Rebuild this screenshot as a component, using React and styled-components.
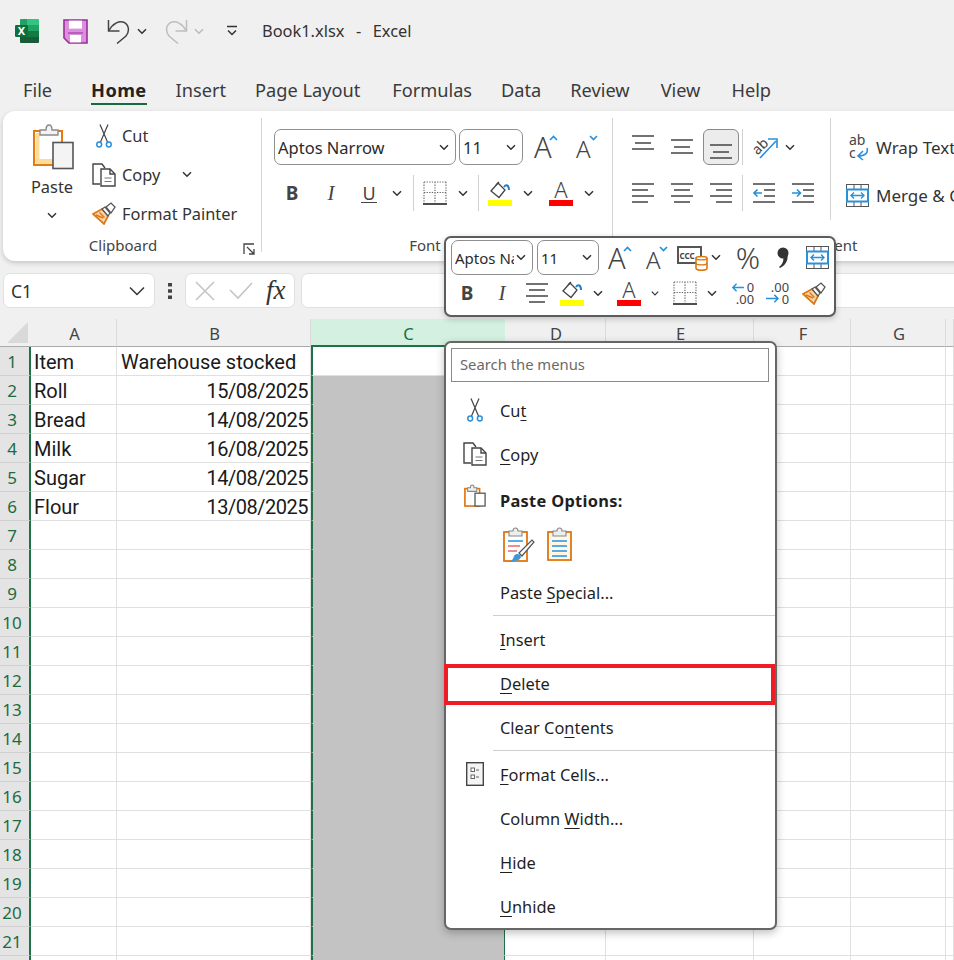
import React from "react";
import styled, { createGlobalStyle } from "styled-components";

const GlobalStyle = createGlobalStyle`
  html, body {
    margin: 0;
    padding: 0;
    width: 954px;
    height: 960px;
    overflow: hidden;
    background: #f0f0f0;
    font-family: "Noto Sans", "Open Sans", sans-serif;
    color: #2b2b2b;
  }
`;

const Page = styled.div`
  position: relative;
  width: 954px;
  height: 960px;
  overflow: hidden;
  display: flex;
  flex-direction: column;
`;

const TitleBar = styled.div`
  height: 62px;
  display: flex;
  align-items: center;
  flex: none;
`;

const Slot = styled.div`
  width: ${p => p.$w}px;
  margin-left: ${p => p.$ml || 0}px;
  flex: none;
  display: flex;
  align-items: center;
  justify-content: center;
`;

const TitleText = styled.div`
  margin-left: 24px;
  padding-bottom: 2px;
  font-size: 16.4px;
  word-spacing: 1.5px;
  white-space: pre;
  color: #333;
`;

const Tabs = styled.div`
  height: 49px;
  flex: none;
  display: flex;
  padding-left: 23px;
`;

const Tab = styled.div`
  margin-left: ${p => p.$ml}px;
  padding-top: 15px;
  height: 26px;
  font-size: 18.2px;
  line-height: 26px;
  font-weight: ${p => (p.$active ? 700 : 400)};
  letter-spacing: ${p => (p.$active ? "0.4px" : "0")};
  color: ${p => (p.$active ? "#222" : "#3a3a3a")};
  border-bottom: 2px solid ${p => (p.$active ? "#146c3e" : "transparent")};
`;

const Ribbon = styled.div`
  flex: none;
  width: 1100px;
  height: 150px;
  margin-left: 3px;
  background: #fff;
  border-radius: 12px;
  box-shadow: 0 2px 5px rgba(0, 0, 0, 0.18);
  display: flex;
`;

const Group = styled.div`
  width: ${p => p.$w}px;
  flex: none;
  display: flex;
  flex-direction: column;
  position: relative;
`;

const GroupBody = styled.div`
  flex: 1;
  padding: ${p => p.$pad || "18px 0 0 12px"};
  display: flex;
  min-height: 0;
`;

const GroupFooter = styled.div`
  height: 32px;
  display: flex;
  align-items: flex-start;
`;

const GroupLabel = styled.div`
  flex: 1;
  padding-top: 4px;
  padding-right: ${p => p.$pr || 0}px;
  text-align: center;
  font-size: 15px;
  line-height: 24px;
  color: #444;
`;

const Launcher = styled.div`
  width: 14px;
  margin-right: 4px;
  padding-top: 9px;
`;

const GroupSep = styled.div`
  width: 1px;
  flex: none;
  margin: ${p => p.$m || "7px 0 9px"};
  background: #d4d4d4;
`;

const PasteButton = styled.div`
  width: 44px;
  margin-left: 27px;
  padding-top: 13px;
  display: flex;
  flex-direction: column;
  align-items: center;
  font-size: 16.4px;
  line-height: 22px;
  color: #333;
`;

const PasteIconBox = styled.div`
  height: 52px;
  margin-left: 4px;
`;

const PasteChevron = styled.div`
  margin-top: 4px;
`;

const Commands = styled.div`
  margin-left: 18px;
  padding-top: 5px;
  display: flex;
  flex-direction: column;
`;

const Command = styled.div`
  height: 39px;
  flex: none;
  display: flex;
  align-items: center;
  font-size: 16.4px;
  color: #333;
`;

const CommandIcon = styled.div`
  width: 30px;
  flex: none;
  display: flex;
  justify-content: ${p => (p.$center ? "center" : "flex-start")};
  padding-right: ${p => (p.$center ? 6 : 0)}px;
  box-sizing: border-box;
`;

const Stack = styled.div`
  width: ${p => p.$w || "auto"};
  flex: none;
  display: flex;
  flex-direction: column;
`;

const Strip = styled.div`
  display: flex;
  align-items: center;
  height: ${p => p.$h || 36}px;
  margin-top: ${p => p.$mt || 0}px;
  flex: none;
`;

const SelectBox = styled.div`
  width: ${p => p.$w}px;
  height: ${p => p.$h || 36}px;
  margin-right: ${p => p.$mr ?? 3}px;
  flex: none;
  box-sizing: border-box;
  border: 1px solid #8f8f8f;
  border-radius: 7px;
  background: #fff;
  display: flex;
  align-items: center;
  padding: 0 6px 0 3px;
  font-size: ${p => p.$fs || 16.5}px;
  color: #2b2b2b;
  overflow: hidden;
`;

const SelectText = styled.span`
  flex: 1;
  margin-right: 2px;
  overflow: hidden;
  white-space: nowrap;
`;

const Glyph = styled.span`
  font-family: ${p => (p.$serif ? '"Liberation Serif", serif' : '"Noto Sans", sans-serif')};
  font-size: ${p => p.$fs || 19}px;
  font-weight: ${p => p.$weight || 400};
  font-style: ${p => (p.$italic ? "italic" : "normal")};
  line-height: 1;
  color: #444;
  ${p => p.$underline && "border-bottom: 1.5px solid #444; padding: 0 1px;"}
`;

const VSep = styled.div`
  width: 1px;
  height: 36px;
  flex: none;
  background: #d0d0d0;
  margin-left: ${p => p.$ml || 0}px;
`;

const AlignButton = styled.div`
  width: 36px;
  height: 36px;
  flex: none;
  margin-left: ${p => p.$ml || 0}px;
  box-sizing: border-box;
  display: flex;
  justify-content: center;
  border: 1px solid ${p => (p.$active ? "#8a8a8a" : "transparent")};
  border-radius: 6px;
  background: ${p => (p.$active ? "#ececec" : "transparent")};
`;

const WrapColumn = styled.div`
  margin-left: 15px;
  display: flex;
  flex-direction: column;
  gap: 12px;
`;

const WrapRow = styled.div`
  height: 36px;
  display: flex;
  align-items: center;
  gap: 7px;
  font-size: 17px;
  color: #333;
  white-space: nowrap;
`;

const FormulaBar = styled.div`
  flex: none;
  margin-top: 12px;
  height: 35px;
  padding-left: 3px;
  display: flex;
  align-items: stretch;
`;

const NameBox = styled.div`
  width: 152px;
  flex: none;
  box-sizing: border-box;
  background: #fff;
  border: 1px solid #e0e0e0;
  border-radius: 7px;
  padding: 0 9px 0 7px;
  display: flex;
  align-items: center;
  justify-content: space-between;
  font-size: 17.5px;
  color: #333;
`;

const Dots = styled.div`
  width: 30px;
  flex: none;
  display: flex;
  align-items: center;
  justify-content: center;
`;

const FxBox = styled.div`
  width: 110px;
  flex: none;
  box-sizing: border-box;
  background: #fff;
  border: 1px solid #e0e0e0;
  border-radius: 7px;
  display: flex;
  align-items: center;
  padding-left: 9px;
`;

const FxGlyph = styled.span`
  margin-left: 13px;
  font-family: "Liberation Serif", serif;
  font-style: italic;
  font-size: 27px;
  font-weight: 400;
  color: #333;
  line-height: 1;
`;

const FormulaInput = styled.div`
  flex: none;
  width: 700px;
  margin-left: 6px;
  box-sizing: border-box;
  background: #fff;
  border: 1px solid #e0e0e0;
  border-radius: 7px;
`;

const Sheet = styled.div`
  flex: none;
  margin-top: 11px;
  display: grid;
  grid-template-columns: 31px 86px 194px 194px 101px 148px 97px 95px 8px;
  grid-template-rows: 28px repeat(22, 29px);
`;

const Corner = styled.div`
  background: #f0f0f0;
  border-bottom: 1px solid #aaa;
  box-sizing: border-box;
  display: flex;
  align-items: flex-end;
  justify-content: flex-end;
  padding: 0 3px 3px 0;
`;

const ColHead = styled.div`
  box-sizing: border-box;
  background: ${p => (p.$selected ? "#d3f0e0" : "#f0f0f0")};
  color: ${p => (p.$selected ? "#1c6b41" : "#444")};
  border-right: 1px solid ${p => (p.$selected ? "#d3f0e0" : "#dadada")};
  border-bottom: ${p => (p.$selected ? "2px solid #1f7246" : "1px solid #aaa")};
  font-size: 16.5px;
  display: flex;
  align-items: center;
  justify-content: center;
  padding: 2px 0 0 2px;
`;

const RowHead = styled.div`
  box-sizing: border-box;
  background: #e4e4e4;
  color: #1c6b41;
  border-bottom: 1px solid #cfcfcf;
  border-right: 2px solid #1f7246;
  font-size: 17px;
  display: flex;
  align-items: center;
  justify-content: center;
  padding-right: 5px;
`;

const Cell = styled.div`
  box-sizing: border-box;
  background: ${p => (p.$shade ? "#c3c3c3" : "#fff")};
  border-bottom: 1px solid ${p => (p.$shade ? "#c3c3c3" : "#e0e0e0")};
  border-right: 1px solid #e0e0e0;
  font-family: "Roboto", sans-serif;
  font-size: 20px;
  color: #1a1a1a;
  line-height: 30px;
  padding: 0 2px 0 ${p => p.$pl || 3}px;
  letter-spacing: ${p => (p.$right ? "-0.5px" : "0")};
  text-align: ${p => (p.$right ? "right" : "left")};
  white-space: nowrap;
  ${p => p.$selected && "border-left: 2px solid #1f7246; border-right: 2px solid #1f7246; margin-right: -1px;"}
`;

const MiniBar = styled.div`
  position: absolute;
  left: 444px;
  top: 236px;
  width: 392px;
  height: 81px;
  box-sizing: border-box;
  padding: 2px 5px;
  background: #fff;
  border: 2px solid #5c5c5c;
  border-radius: 7px;
  box-shadow: 0 2px 6px rgba(0, 0, 0, 0.2);
  overflow: hidden;
`;

const Menu = styled.div`
  position: absolute;
  left: 444px;
  top: 341px;
  width: 333px;
  height: 589px;
  box-sizing: border-box;
  padding: 5px 0 0;
  background: #fff;
  border: 2px solid #666;
  border-radius: 7px;
  box-shadow: 0 3px 8px rgba(0, 0, 0, 0.25);
`;

const SearchBox = styled.div`
  height: 34px;
  margin: 0 6px 7px 5px;
  box-sizing: border-box;
  border: 1px solid #8a8a8a;
  display: flex;
  align-items: center;
  padding: 0 0 3px 8px;
  font-size: 14.8px;
  color: #6a6a6a;
`;

const MenuItem = styled.div`
  position: relative;
  height: ${p => p.$h || 44}px;
  box-sizing: border-box;
  padding-bottom: ${p => (p.$bold ? 0 : 2)}px;
  display: flex;
  align-items: center;
  font-size: 16.4px;
  font-weight: ${p => (p.$bold ? 700 : 400)};
  letter-spacing: ${p => (p.$bold ? "0.3px" : "0")};
  color: #1f1f1f;
  ${p => p.$highlight && `
    &::after {
      content: "";
      position: absolute;
      left: -2px;
      right: 0;
      top: 2px;
      bottom: 1px;
      border: 4.5px solid #ee1c25;
    }
  `}
  u {
    text-underline-offset: 3px;
    text-decoration-thickness: 1px;
  }
`;

const MenuIcon = styled.div`
  width: 54px;
  flex: none;
  box-sizing: border-box;
  padding-left: 4px;
  display: flex;
  justify-content: center;
  ${p => p.$top && "align-self: flex-start; margin-top: 6px;"}
`;

const MenuSep = styled.div`
  height: 1px;
  margin: 0 0 2px 47px;
  background: #cfcfcf;
`;

const PasteChoices = styled.div`
  height: 48px;
  box-sizing: border-box;
  padding: 4px 0 0 57px;
  display: flex;
  align-items: flex-start;
  gap: 12px;
`;

const line = { stroke: "#444", strokeWidth: 1.4, fill: "none" };
const blue = { stroke: "#2a90d9", strokeWidth: 1.6, fill: "none" };

const Chev = ({ light, wide }) => (
  <svg width={wide ? 16 : 10} height={wide ? 10 : 7} viewBox={wide ? "0 0 16 10" : "0 0 10 7"}>
    <path
      d={wide ? "M1 1.5l7 7 7-7" : "M1 1.2l4 4 4-4"}
      fill="none"
      stroke={light ? "#bbb" : "#333"}
      strokeWidth={1.5}
    />
  </svg>
);

const ExcelLogo = () => (
  <svg width="24" height="24" viewBox="0 0 24 24">
    <path d="M6 0h6v6H5V1a1 1 0 0 1 1-1z" fill="#21a366" />
    <path d="M12 0h11a1 1 0 0 1 1 1v5H12z" fill="#33c481" />
    <rect x="5" y="6" width="7" height="6" fill="#107c41" />
    <rect x="12" y="6" width="12" height="6" fill="#21a366" />
    <rect x="5" y="12" width="7" height="6" fill="#185c37" />
    <rect x="12" y="12" width="12" height="6" fill="#107c41" />
    <path d="M5 18h19v5a1 1 0 0 1-1 1H6a1 1 0 0 1-1-1z" fill="#185c37" />
    <rect x="0" y="6" width="13" height="12" rx="1.2" fill="#0f6f3c" />
    <text x="6.5" y="15.6" textAnchor="middle" fontSize="11" fontWeight="700" fontFamily="Noto Sans" fill="#fff">X</text>
  </svg>
);

const SaveIcon = () => (
  <svg width="25" height="25" viewBox="0 0 25 25">
    <path d="M1 1h23v23H6l-5-5z" fill="#dc8fdc" stroke="#9b2d9b" strokeWidth="1.6" />
    <rect x="6" y="1.6" width="13" height="8" fill="#fff" />
    <rect x="7" y="16" width="11" height="7.4" fill="#fff" />
    <path d="M5 14h15" stroke="#9b2d9b" strokeWidth="1" />
  </svg>
);

const UndoIcon = ({ color, flip }) => (
  <svg width="24" height="25" viewBox="0 0 24 25" style={flip ? { transform: "scaleX(-1)" } : undefined}>
    <path d="M1.5 1v11h11" fill="none" stroke={color} strokeWidth="1.5" />
    <path d="M2 11.5C6 4 12 2 16 3c6 2 7 9 3 14L10 24.5" fill="none" stroke={color} strokeWidth="1.5" />
  </svg>
);

const CustomizeIcon = () => (
  <svg width="12" height="12" viewBox="0 0 12 12">
    <path d="M1 1.5h10" stroke="#333" strokeWidth="1.5" />
    <path d="M2 5.5l4 4 4-4" fill="none" stroke="#333" strokeWidth="1.5" />
  </svg>
);

const PasteBig = () => (
  <svg width="42" height="46" viewBox="0 0 42 46">
    <rect x="1" y="7" width="28" height="34" fill="#fff" stroke="#e8790f" strokeWidth="2" />
    <rect x="2.5" y="35" width="25" height="5" fill="#fbdc9c" />
    <rect x="2.5" y="9" width="4" height="30" fill="#fbdc9c" />
    <path d="M7 11V6h6c0-3 1-5 3-5s3 2 3 5h6v5z" fill="#f3f3f3" stroke="#8a8a8a" strokeWidth="1.4" />
    <rect x="20" y="18.5" width="20" height="26" fill="#f4f4f4" stroke="#555" strokeWidth="1.6" />
  </svg>
);

const Scissors = () => (
  <svg width="16" height="24" viewBox="0 0 16 24">
    <path d="M4 0.5l7.5 17.5M12 0.5L4.5 18" fill="none" stroke="#444" strokeWidth="1.2" />
    <circle cx="3.2" cy="20.5" r="2.4" fill="none" stroke="#2a90d9" strokeWidth="1.5" />
    <circle cx="12.8" cy="20.5" r="2.4" fill="none" stroke="#2a90d9" strokeWidth="1.5" />
  </svg>
);

const CopyIcon = () => (
  <svg width="24" height="24" viewBox="0 0 24 24">
    <path d="M8 21H1V1h9l3 4" {...line} />
    <path d="M9 6h9l5 5v12H9z" fill="#fff" stroke="#444" strokeWidth="1.4" />
    <path d="M18 6v5h5" {...line} />
    <path d="M12.5 15h7M12.5 18.5h7" stroke="#777" strokeWidth="1.1" />
  </svg>
);

const PainterIcon = () => (
  <svg width="24" height="23" viewBox="0 0 24 23">
    <path d="M1 12l9-5 6 7-4 8z" fill="#f7d6ae" stroke="#e0760f" strokeWidth="1.7" />
    <path d="M4 13l7 3M7.5 10.5l5 5" stroke="#e0760f" strokeWidth="1.4" />
    <path d="M10 7l3-2 5 6-2 3z" fill="#fff" stroke="#555" strokeWidth="1.3" />
    <path d="M14 5l5-4 4 4-4 6z" fill="#fff" stroke="#555" strokeWidth="1.3" />
  </svg>
);

const LauncherIcon = () => (
  <svg width="12" height="12" viewBox="0 0 12 12">
    <path d="M11 1H1v10" fill="none" stroke="#444" strokeWidth="1.3" />
    <path d="M4 4l7 7M11 6v5H6" fill="none" stroke="#444" strokeWidth="1.3" />
  </svg>
);

const SizeA = ({ up, big }) => (
  <svg width="24" height="26" viewBox="0 0 24 26">
    <text x={big ? 0 : 2} y="24" fontFamily="Noto Sans" fontWeight="300" fontSize={big ? 29 : 24} fill="#444">A</text>
    <path d={up ? "M16 6l3.5-3.5L23 6" : "M16 2l3.5 3.5L23 2"} fill="none" stroke="#2a90d9" strokeWidth="1.7" />
  </svg>
);

const BorderIcon = () => (
  <svg width="24" height="24" viewBox="0 0 24 24">
    <path d="M1 1h22M1 1v21M23 1v21M12 1v21M1 11.5h22" fill="none" stroke="#666" strokeWidth="1.1" strokeDasharray="1.3 1.3" />
    <path d="M0 23h24" stroke="#222" strokeWidth="1.6" />
  </svg>
);

const FillIcon = () => (
  <svg width="24" height="26" viewBox="0 0 24 26">
    <path d="M3 11l7-8 7 7-6 7.5z" fill="#fff" stroke="#444" strokeWidth="1.3" />
    <path d="M8 5l3-3" stroke="#444" strokeWidth="1.3" />
    <path d="M16 7c2-3 5-2 5 3" fill="none" stroke="#1f7fc9" strokeWidth="2" />
    <rect x="0" y="20" width="24" height="6" fill="#ffff00" />
  </svg>
);

const FontColorIcon = () => (
  <svg width="24" height="26" viewBox="0 0 24 26">
    <text x="12" y="18" textAnchor="middle" fontFamily="Noto Sans" fontWeight="300" fontSize="22" fill="#444">A</text>
    <rect x="0" y="20" width="24" height="6" fill="#ff0000" />
  </svg>
);

const VAlignIcon = ({ ys }) => (
  <svg width="22" height="34" viewBox="0 0 22 34">
    <path d={`M0 ${ys[0]}h22M3 ${ys[1]}h16M0 ${ys[2]}h22`} stroke="#444" strokeWidth="1.4" />
  </svg>
);

const HAlignIcon = ({ kind }) => {
  const x = kind === "left" ? 0 : kind === "center" ? 3 : 6;
  return (
    <svg width="22" height="20" viewBox="0 0 22 20">
      <path d={`M0 1h22M${x} 7h16M0 13h22M${x} 19h16`} stroke="#444" strokeWidth="1.4" />
    </svg>
  );
};

const IndentIcon = ({ more }) => (
  <svg width="22" height="20" viewBox="0 0 22 20">
    <path d="M0 1h22M11 7h11M11 13h11M0 19h22" stroke="#444" strokeWidth="1.4" />
    <path d={more ? "M0 10h8M5 6.5L8.5 10 5 13.5" : "M9 10H1M4.5 6.5L1 10l3.5 3.5"} {...blue} />
  </svg>
);

const OrientIcon = () => (
  <svg width="26" height="24" viewBox="0 0 26 24">
    <text x="0" y="17" transform="rotate(-45 7 12)" fontFamily="Noto Sans" fontSize="14" fill="#444">ab</text>
    <path d="M8 23L24 6M16 4h9v9" {...blue} />
  </svg>
);

const WrapIcon = () => (
  <svg width="23" height="27" viewBox="-3 0 23 27">
    <text x="0" y="11" fontFamily="Noto Sans" fontSize="14" fill="#444">ab</text>
    <text x="0" y="24" fontFamily="Noto Sans" fontSize="14" fill="#444">c</text>
    <path d="M18 14c1.5 5-2 8-9 8M14 17l-5 5 5 4" {...blue} />
  </svg>
);

const MergeIcon = () => (
  <svg width="23" height="23" viewBox="0 0 23 23">
    <rect x="0.5" y="0.5" width="22" height="22" fill="#fff" stroke="#555" />
    <path d="M8 0v6M15 0v6M8 17v6M15 17v6" stroke="#555" />
    <rect x="1" y="5.5" width="21" height="12" fill="#fff" stroke="#2a90d9" strokeWidth="2" />
    <path d="M5 11.5h13M8 8.5l-3 3 3 3M15 8.5l3 3-3 3" fill="none" stroke="#2a90d9" strokeWidth="1.4" />
  </svg>
);

const CellStyleIcon = () => (
  <svg width="32" height="26" viewBox="0 0 32 26">
    <rect x="1" y="2" width="23" height="16" fill="#fff" stroke="#555" strokeWidth="2" />
    <text x="10" y="13.5" textAnchor="middle" fontFamily="Noto Sans" fontSize="8" fontWeight="700" fill="#444">CCC</text>
    <path d="M19 13c0-2 11-2 11 0v10c0 3-11 3-11 0z" fill="#fff" stroke="#e0760f" strokeWidth="1.6" />
    <path d="M19 13c0 2.5 11 2.5 11 0M19 18c0 2.5 11 2.5 11 0" fill="none" stroke="#e0760f" strokeWidth="1.4" />
  </svg>
);

const CommaIcon = () => (
  <svg width="14" height="24" viewBox="0 0 14 24">
    <circle cx="7" cy="7" r="5.5" fill="#333" />
    <path d="M11 7c2 6-1 12-7 15l-1-1c4-3 5-7 4-10z" fill="#333" />
  </svg>
);

const DecimalIcon = ({ more }) => (
  <svg width="26" height="25" viewBox="0 0 26 25">
    <text x="25" y="11" textAnchor="end" fontFamily="Noto Sans" fontSize="14" fill="#444">{more ? ".00" : "0"}</text>
    <text x="25" y="24" textAnchor="end" fontFamily="Noto Sans" fontSize="14" fill="#444">{more ? "0" : ".00"}</text>
    <path d={more ? "M0 18h13M9 14l4 4-4 4" : "M14 6H2M6 2L2 6l4 4"} {...blue} />
  </svg>
);

const CrossIcon = () => (
  <svg width="20" height="20" viewBox="0 0 20 20">
    <path d="M1 1l18 18M19 1L1 19" stroke="#c4c4c4" strokeWidth="1.6" />
  </svg>
);

const CheckIcon = () => (
  <svg width="24" height="18" viewBox="0 0 24 18">
    <path d="M1 8l8 8L23 1" fill="none" stroke="#c4c4c4" strokeWidth="1.6" />
  </svg>
);

const CornerIcon = () => (
  <svg width="21" height="21" viewBox="0 0 21 21">
    <path d="M21 0v21H0z" fill="#d9d9d9" />
  </svg>
);

const DotsIcon = () => (
  <svg width="4" height="16" viewBox="0 0 4 16">
    <path d="M0 0h4v3.6H0zM0 6.2h4v3.6H0zM0 12.4h4V16H0z" fill="#444" />
  </svg>
);

const PasteSmall = () => (
  <svg width="22" height="25" viewBox="0 0 24 25">
    <rect x="1" y="5" width="16" height="19" fill="#fff" stroke="#e0760f" strokeWidth="1.8" />
    <path d="M4 8V4h3c0-2 1-3 2-3s2 1 2 3h3v4z" fill="#eee" stroke="#888" strokeWidth="1.1" />
    <rect x="12" y="10" width="11" height="14" fill="#fff" stroke="#555" strokeWidth="1.4" />
  </svg>
);

const PasteBrush = () => (
  <svg width="32" height="36" viewBox="0 0 32 36">
    <rect x="1" y="5" width="23" height="29" fill="#fff" stroke="#e0760f" strokeWidth="1.8" />
    <path d="M6 9V4h4c0-2 1-3 2.5-3S15 2 15 4h4v5z" fill="#eee" stroke="#888" strokeWidth="1.1" />
    <path d="M5 14h15" stroke="#2a90d9" strokeWidth="1.5" />
    <path d="M5 19h12" stroke="#e46a6a" strokeWidth="1.5" />
    <path d="M5 24h9" stroke="#e46a6a" strokeWidth="1.5" />
    <path d="M16 26L29 13l2 2-12 14z" fill="#fff" stroke="#555" strokeWidth="1.2" />
    <path d="M2 35c6 0 8-2 9-6 2-3 6-2 7 0 0 4-5 6-16 6z" fill="#3f97d8" />
  </svg>
);

const PasteValues = () => (
  <svg width="25" height="34" viewBox="0 0 25 34">
    <rect x="1" y="5" width="23" height="28" fill="#fff8ea" stroke="#e0760f" strokeWidth="1.8" />
    <path d="M6 9V4h4c0-2 1-3 2.5-3S15 2 15 4h4v5z" fill="#eee" stroke="#888" strokeWidth="1.1" />
    <path d="M5 14h15M5 19h15M5 24h15M5 29h15" stroke="#2a90d9" strokeWidth="1.5" />
  </svg>
);

const FormatCellsIcon = () => (
  <svg width="18" height="24" viewBox="0 0 18 24">
    <rect x="0.7" y="0.7" width="16.6" height="22.6" fill="#f4f4f4" stroke="#444" strokeWidth="1.4" />
    <rect x="5" y="6" width="3.5" height="3.5" fill="#fff" stroke="#666" />
    <rect x="5" y="13" width="3.5" height="3.5" fill="#fff" stroke="#666" />
    <path d="M10 8h3M10 15h3" stroke="#666" />
  </svg>
);

const TAB_ITEMS = [
  ["File", 0],
  ["Home", 39, true],
  ["Insert", 29],
  ["Page Layout", 29],
  ["Formulas", 32],
  ["Data", 29],
  ["Review", 29],
  ["View", 31],
  ["Help", 31]
];

const COLUMNS = ["A", "B", "C", "D", "E", "F", "G"];

const DATA = [
  ["Item", "Warehouse stocked"],
  ["Roll", "15/08/2025"],
  ["Bread", "14/08/2025"],
  ["Milk", "16/08/2025"],
  ["Sugar", "14/08/2025"],
  ["Flour", "13/08/2025"]
];

const ROWS = Array.from({ length: 22 }, (_, i) => i + 1);

const SheetRow = ({ n }) => {
  const values = DATA[n - 1] || [];
  return (
    <>
      <RowHead>{n}</RowHead>
      <Cell>{values[0]}</Cell>
      <Cell $right={n > 1} $pl={4}>{values[1]}</Cell>
      <Cell $selected $shade={n > 1} />
      <Cell />
      <Cell />
      <Cell />
      <Cell />
      <Cell />
    </>
  );
};

const App = () => (
  <Page>
    <GlobalStyle />
    <TitleBar>
      <Slot $w={24} $ml={15}><ExcelLogo /></Slot>
      <Slot $w={25} $ml={24}><SaveIcon /></Slot>
      <Slot $w={24} $ml={19}><UndoIcon color="#444" /></Slot>
      <Slot $w={10} $ml={6}><Chev /></Slot>
      <Slot $w={24} $ml={17}><UndoIcon color="#bdbdbd" flip /></Slot>
      <Slot $w={10} $ml={6}><Chev light /></Slot>
      <Slot $w={12} $ml={22}><CustomizeIcon /></Slot>
      <TitleText>Book1.xlsx  -  Excel</TitleText>
    </TitleBar>

    <Tabs>
      {TAB_ITEMS.map(([label, ml, active]) => (
        <Tab key={label} $ml={ml} $active={active}>{label}</Tab>
      ))}
    </Tabs>

    <Ribbon>
      <Group $w={258}>
        <GroupBody $pad="0">
          <PasteButton>
            <PasteIconBox><PasteBig /></PasteIconBox>
            Paste
            <PasteChevron><Chev /></PasteChevron>
          </PasteButton>
          <Commands>
            <Command>
              <CommandIcon $center><Scissors /></CommandIcon>
              Cut
            </Command>
            <Command>
              <CommandIcon><CopyIcon /></CommandIcon>
              Copy
              <Slot $w={10} $ml={22}><Chev /></Slot>
            </Command>
            <Command>
              <CommandIcon><PainterIcon /></CommandIcon>
              Format Painter
            </Command>
          </Commands>
        </GroupBody>
        <GroupFooter>
          <GroupLabel>Clipboard</GroupLabel>
          <Launcher><LauncherIcon /></Launcher>
        </GroupFooter>
      </Group>
      <GroupSep />

      <Group $w={350}>
        <GroupBody>
          <Stack>
            <Strip>
              <SelectBox $w={182}><SelectText>Aptos Narrow</SelectText><Chev /></SelectBox>
              <SelectBox $w={64}><SelectText>11</SelectText><Chev /></SelectBox>
              <Slot $w={24} $ml={8}><SizeA up big /></Slot>
              <Slot $w={24} $ml={16}><SizeA /></Slot>
            </Strip>
            <Strip $mt={10}>
              <Slot $w={36}><Glyph $weight={700}>B</Glyph></Slot>
              <Slot $w={42}><Glyph $italic $serif $fs={21}>I</Glyph></Slot>
              <Slot $w={34}><Glyph $underline $fs={18}>U</Glyph></Slot>
              <Slot $w={22}><Chev /></Slot>
              <VSep $ml={5} />
              <Slot $w={24} $ml={9}><BorderIcon /></Slot>
              <Slot $w={10} $ml={11}><Chev /></Slot>
              <VSep $ml={10} />
              <Slot $w={24} $ml={9}><FillIcon /></Slot>
              <Slot $w={10} $ml={11}><Chev /></Slot>
              <Slot $w={24} $ml={16}><FontColorIcon /></Slot>
              <Slot $w={10} $ml={11}><Chev /></Slot>
            </Strip>
          </Stack>
        </GroupBody>
        <GroupFooter>
          <GroupLabel $pr={24}>Font</GroupLabel>
        </GroupFooter>
      </Group>
      <GroupSep />

      <Group $w={416}>
        <GroupBody>
          <Stack $w="205px">
            <Strip>
              <AlignButton><VAlignIcon ys={[6, 13, 19]} /></AlignButton>
              <AlignButton $ml={3}><VAlignIcon ys={[10, 17, 23]} /></AlignButton>
              <AlignButton $ml={3} $active><VAlignIcon ys={[15, 22, 28]} /></AlignButton>
              <VSep $ml={3} />
              <Slot $w={26} $ml={9}><OrientIcon /></Slot>
              <Slot $w={10} $ml={7}><Chev /></Slot>
            </Strip>
            <Strip $mt={10}>
              <Slot $w={36}><HAlignIcon kind="left" /></Slot>
              <Slot $w={36} $ml={3}><HAlignIcon kind="center" /></Slot>
              <Slot $w={36} $ml={3}><HAlignIcon kind="right" /></Slot>
              <VSep $ml={3} />
              <Slot $w={22} $ml={10}><IndentIcon /></Slot>
              <Slot $w={22} $ml={17}><IndentIcon more /></Slot>
            </Strip>
          </Stack>
          <GroupSep $m="-11px 0 9px" />
          <WrapColumn>
            <WrapRow><WrapIcon />Wrap Text</WrapRow>
            <WrapRow><MergeIcon />Merge &amp; Center</WrapRow>
          </WrapColumn>
        </GroupBody>
        <GroupFooter>
          <GroupLabel>Alignment</GroupLabel>
        </GroupFooter>
      </Group>
    </Ribbon>

    <FormulaBar>
      <NameBox>C1<Chev wide /></NameBox>
      <Dots><DotsIcon /></Dots>
      <FxBox>
        <CrossIcon />
        <Slot $w={24} $ml={14}><CheckIcon /></Slot>
        <FxGlyph>fx</FxGlyph>
      </FxBox>
      <FormulaInput />
    </FormulaBar>

    <Sheet>
      <Corner><CornerIcon /></Corner>
      {COLUMNS.map(c => (
        <ColHead key={c} $selected={c === "C"}>{c}</ColHead>
      ))}
      <ColHead />
      {ROWS.map(n => <SheetRow key={n} n={n} />)}
    </Sheet>

    <MiniBar>
      <Strip $h={35}>
        <SelectBox $w={82} $h={35} $fs={15} $mr={4}><SelectText>Aptos Narrow</SelectText><Chev /></SelectBox>
        <SelectBox $w={62} $h={35} $fs={15}><SelectText>11</SelectText><Chev /></SelectBox>
        <Slot $w={24} $ml={6}><SizeA up big /></Slot>
        <Slot $w={24} $ml={12}><SizeA /></Slot>
        <Slot $w={32} $ml={9}><CellStyleIcon /></Slot>
        <Slot $w={10} $ml={2}><Chev /></Slot>
        <Slot $w={24} $ml={15}><Glyph $fs={30} $weight={300}>%</Glyph></Slot>
        <Slot $w={14} $ml={16}><CommaIcon /></Slot>
        <Slot $w={23} $ml={16}><MergeIcon /></Slot>
      </Strip>
      <Strip $h={32} $mt={2}>
        <Slot $w={32}><Glyph $weight={700}>B</Glyph></Slot>
        <Slot $w={38}><Glyph $italic $serif $fs={21}>I</Glyph></Slot>
        <Slot $w={32}><HAlignIcon kind="center" /></Slot>
        <Slot $w={38}><FillIcon /></Slot>
        <Slot $w={14}><Chev /></Slot>
        <Slot $w={44} $ml={2}><FontColorIcon /></Slot>
        <Slot $w={8}><Chev /></Slot>
        <Slot $w={44} $ml={4}><BorderIcon /></Slot>
        <Slot $w={10}><Chev /></Slot>
        <Slot $w={24} $ml={14}><DecimalIcon /></Slot>
        <Slot $w={24} $ml={11}><DecimalIcon more /></Slot>
        <Slot $w={24} $ml={12}><PainterIcon /></Slot>
      </Strip>
    </MiniBar>

    <Menu>
      <SearchBox>Search the menus</SearchBox>
      <MenuItem><MenuIcon><Scissors /></MenuIcon><span>Cu<u>t</u></span></MenuItem>
      <MenuItem><MenuIcon><CopyIcon /></MenuIcon><span><u>C</u>opy</span></MenuItem>
      <MenuItem $bold $h={46}>
        <MenuIcon $top><PasteSmall /></MenuIcon>
        Paste Options:
      </MenuItem>
      <PasteChoices>
        <PasteBrush />
        <PasteValues />
      </PasteChoices>
      <MenuItem>
        <MenuIcon />
        <span>Paste <u>S</u>pecial...</span>
      </MenuItem>
      <MenuSep />
      <MenuItem><MenuIcon /><span><u>I</u>nsert</span></MenuItem>
      <MenuItem $highlight><MenuIcon /><span><u>D</u>elete</span></MenuItem>
      <MenuItem><MenuIcon /><span>Clear Co<u>n</u>tents</span></MenuItem>
      <MenuSep />
      <MenuItem><MenuIcon><FormatCellsIcon /></MenuIcon><span><u>F</u>ormat Cells...</span></MenuItem>
      <MenuItem><MenuIcon /><span>Column <u>W</u>idth...</span></MenuItem>
      <MenuItem><MenuIcon /><span><u>H</u>ide</span></MenuItem>
      <MenuItem><MenuIcon /><span><u>U</u>nhide</span></MenuItem>
    </Menu>
  </Page>
);

export default App;
